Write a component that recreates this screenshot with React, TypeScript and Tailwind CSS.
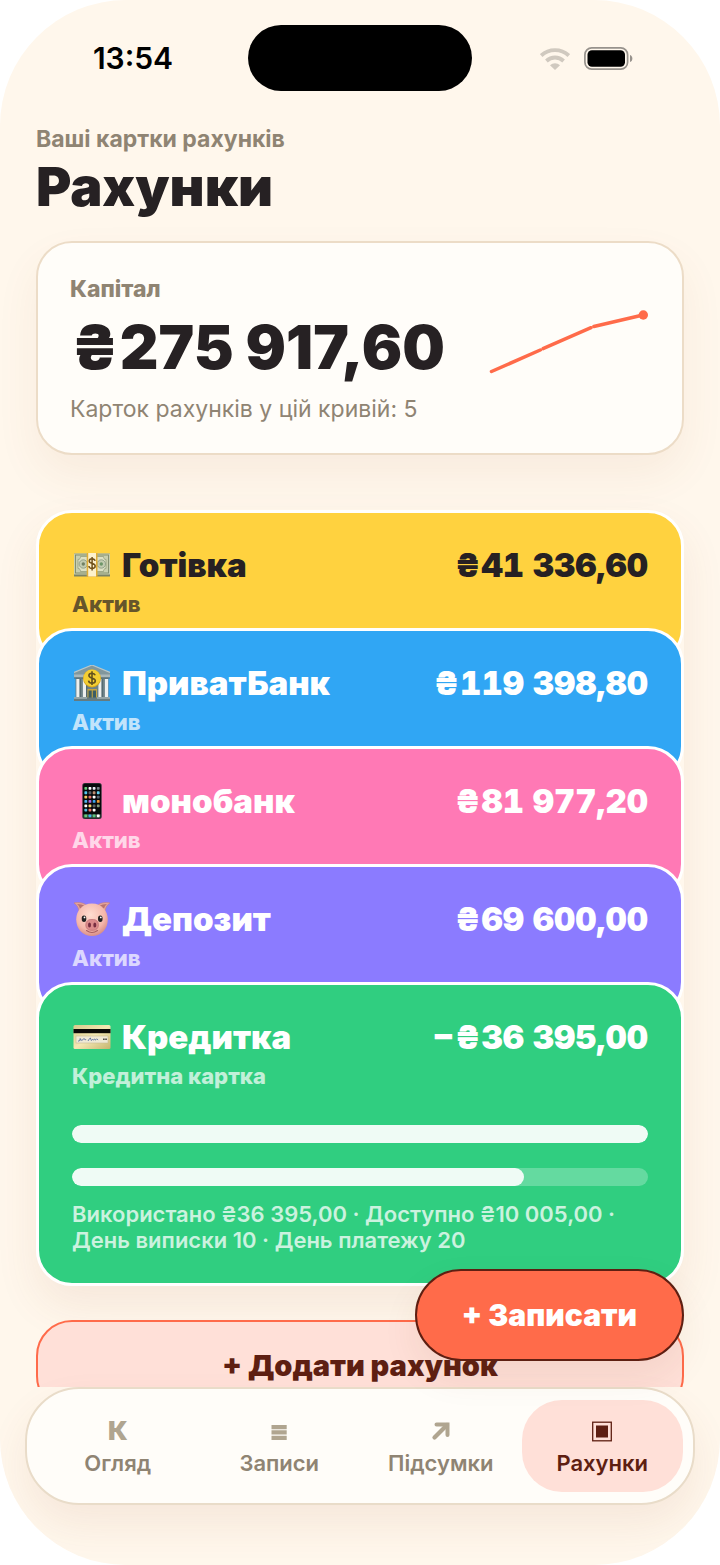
import type { ReactNode } from 'react';

type Account = {
  name: string;
  kind: string;
  balance: string;
  icon: ReactNode;
  tone: string;
};

function BanknoteIcon() {
  return (
    <svg viewBox="0 0 36 36" className="size-9" aria-hidden="true">
      <rect x="0" y="6.500" width="36" height="23" rx="0.600" fill="#7c8467" />
      <rect x="0" y="6.500" width="36" height="21" rx="0.600" fill="#c9cfae" />
      <rect x="1.500" y="8" width="33" height="18" fill="none" stroke="#7e8968" strokeWidth="0.900" />
      <path d="M4 12.500c2 0 2.500-1.500 2.500-3h23c0 1.500.5 3 2.500 3v9c-2 0-2.500 1.500-2.500 3h-23c0-1.500-.5-3-2.500-3z" fill="#dde0c4" stroke="#8b9674" strokeWidth="0.700" />
      <circle cx="9.300" cy="17" r="4.200" fill="#c2cbb0" stroke="#7f9178" strokeWidth="0.700" />
      <circle cx="27.300" cy="17" r="4.200" fill="#c2cbb0" stroke="#7f9178" strokeWidth="0.700" />
      <circle cx="9.300" cy="17" r="1.700" fill="#718164" />
      <circle cx="27.300" cy="17" r="1.700" fill="#6d9568" />
      <rect x="12.700" y="6" width="10.800" height="24" fill="#e0ad35" />
      <rect x="14.200" y="6" width="7.800" height="23.500" fill="#fdf2cd" />
      <path d="M21.100 13.900c-.4-1.400-1.500-2.100-3-2.100-1.700 0-2.900.8-2.900 2.300 0 3.300 6 1.600 6 5 0 1.500-1.300 2.400-3.100 2.400-1.700 0-3-.9-3.200-2.500M18.100 10v13.500" fill="none" stroke="#72531c" strokeWidth="1.500" />
    </svg>
  );
}

function BankIcon() {
  return (
    <svg viewBox="0 0 36 36" className="size-9" aria-hidden="true">
      <rect x="1.500" y="11" width="33" height="23" fill="#6d8287" />
      <path d="M0 7.500 18 0l18 7.500v3H0z" fill="#81979c" />
      <path d="M0 7.500 18 0l18 7.500" fill="none" stroke="#bac7c8" strokeWidth="1.200" />
      <rect x="0" y="9.500" width="36" height="3" fill="#a9b8ba" />
      <path d="M0 13h36" stroke="#526970" strokeWidth="1" />
      <path d="M4 14v18M10.500 14v18M26 14v18M32.500 14v18" stroke="#edf0ee" strokeWidth="3.200" />
      <path d="M6.200 14v18M12.700 14v18M28.200 14v18" stroke="#4d646b" strokeWidth="1.100" />
      <rect x="13.500" y="24" width="9.500" height="9" fill="#c6a640" />
      <rect x="14.500" y="25.500" width="3.200" height="7.500" fill="#3c5d65" />
      <rect x="18.800" y="25.500" width="3.200" height="7.500" fill="#3c5d65" />
      <rect x="0" y="32.500" width="36" height="3.500" fill="#657b80" />
      <path d="M0 33h13M23 33h13" stroke="#c2cbca" strokeWidth="1.200" />
      <circle cx="18" cy="13.500" r="9" fill="#d5a51c" />
      <circle cx="18" cy="13" r="8.500" fill="#f3ce32" />
      <path d="M21.200 10.300c-.5-1.400-1.600-2.100-3.200-2.100-1.800 0-3.100.9-3.100 2.300 0 3.500 6.400 1.800 6.400 5.200 0 1.600-1.400 2.500-3.300 2.500-1.800 0-3.200-.9-3.400-2.600M18 6.300v13.800" fill="none" stroke="#62501c" strokeWidth="1.600" />
    </svg>
  );
}

const appRows = [
  ['#67cc79', '#ffffff', '#e7e9f1', '#788084'],
  ['#54c7ef', '#59616a', '#bd8d71', '#63d1f0'],
  ['#f5cb62', '#e76f65', '#ffffff', '#59636f'],
  ['#4fb5ed', '#a96ae2', '#3ba6ec', '#ef9c35'],
  ['#ffffff', '#f5d775', '#5c6065', '#849b7c'],
  ['#52bee8', '#f17262', '#ffffff', '#0b0b0d'],
  ['#62cc78', '#42b6ed', '#5ac57c', '#ffffff'],
];

function PhoneIcon() {
  return (
    <svg viewBox="0 0 36 36" className="size-9" aria-hidden="true">
      <rect x="8.300" y="0" width="19.400" height="36" rx="2.500" fill="#34363a" />
      <rect x="9" y="0.700" width="18" height="34.600" rx="2" fill="#08090b" />
      <rect x="9.300" y="31" width="17.400" height="4" rx="1" fill="#34463d" />
      {appRows.map((row, y) =>
        row.map((color, x) => (
          <rect key={`${x}-${y}`} x={10.400 + x * 4.150} y={y === 6 ? 31.500 : 4 + y * 4.350} width="2.800" height="2.800" rx="0.700" fill={color} />
        )),
      )}
    </svg>
  );
}

function PigIcon() {
  return (
    <svg viewBox="0 0 36 36" className="size-9" aria-hidden="true">
      <defs>
        <radialGradient id="pig-skin" cx="0.45" cy="0.35" r="0.65">
          <stop offset="0" stopColor="#ffdcd0" />
          <stop offset="0.7" stopColor="#f5b7ab" />
          <stop offset="1" stopColor="#d98f88" />
        </radialGradient>
      </defs>
      <path d="M0 2c4-1 10-.5 13 3L5.500 12C4.800 7.500 3.500 4 0 2zM36 2c-4-1-10-.5-13 3l7.500 7c.7-4.500 2-8 5.500-10z" fill="#e6a59b" stroke="#c77f79" strokeWidth="0.600" />
      <path d="M3 3c3 0 6 .7 8 2.500L6.500 10C6 6.500 5 4.500 3 3zM33 3c-3 0-6 .7-8 2.500l4.500 4.500c.5-3.500 1.500-5.500 3.500-7z" fill="#b97370" />
      <path d="M18 2.500c9.500 0 15.800 7 15.800 16S27.500 35 18 35 2.200 27.500 2.200 18.500 8.500 2.500 18 2.500z" fill="url(#pig-skin)" />
      <ellipse cx="10" cy="17.800" rx="2.300" ry="3.200" fill="#222020" />
      <ellipse cx="26.300" cy="17.800" rx="2.300" ry="3.200" fill="#222020" />
      <circle cx="10.500" cy="16.400" r="0.900" fill="#fff" />
      <circle cx="26.800" cy="16.400" r="0.900" fill="#fff" />
      <path d="M12.500 29.500c3.500 2.500 7.500 2.500 11 0" fill="none" stroke="#a85e60" strokeWidth="1.100" strokeLinecap="round" />
      <rect x="11.800" y="18.500" width="12.600" height="10.800" rx="5" fill="#dc8b8c" stroke="#bb6c70" strokeWidth="0.700" />
      <ellipse cx="15.500" cy="24" rx="1.500" ry="2.500" fill="#782e41" />
      <ellipse cx="20.800" cy="24" rx="1.500" ry="2.500" fill="#782e41" />
    </svg>
  );
}

function CreditCardIcon() {
  return (
    <svg viewBox="0 0 36 36" className="size-9 overflow-visible" aria-hidden="true">
      <defs>
        <linearGradient id="card-gold" x1="0" y1="0" x2="1" y2="1">
          <stop offset="0" stopColor="#d8ca8b" />
          <stop offset="0.5" stopColor="#f4e8b3" />
          <stop offset="1" stopColor="#c5b56e" />
        </linearGradient>
      </defs>
      <rect x="-0.500" y="6" width="37" height="24" rx="1.500" fill="url(#card-gold)" />
      <rect x="-0.500" y="10" width="37" height="4.200" fill="#0b0a08" />
      <rect x="2" y="17" width="32" height="7" fill="#f0ead6" stroke="#c8b991" strokeWidth="0.600" />
      <path d="M4 21.800c1.200.9 2-.3 2.200-2.300.3 2.200 1 2.500 1.800 1.200 1 1.600 1.700-2.600 2.500-.7.500 1.400 1 .8 1.700 0M14 22c.7-1 1.700-2.900 2.300-3 .6.900.6 2 1 2.500.9-.6 1.300-1.800 1.800-.6.700 1.300 1.300-2.500 2-.3.600 1.300 1.300-1.600 2-.4l1 .7" fill="none" stroke="#536a9d" strokeWidth="0.900" />
      <path d="M29 20.300h4" stroke="#4e4c48" strokeWidth="1.600" strokeDasharray="1.700 0.500" />
    </svg>
  );
}

const accounts: Account[] = [
  { name: 'Готівка', kind: 'Актив', balance: '₴41 336,60', icon: <BanknoteIcon />, tone: 'bg-[#ffd23f] text-[#262123]' },
  { name: 'ПриватБанк', kind: 'Актив', balance: '₴119 398,80', icon: <BankIcon />, tone: 'bg-[#30a6f4] text-white' },
  { name: 'монобанк', kind: 'Актив', balance: '₴81 977,20', icon: <PhoneIcon />, tone: 'bg-[#ff79b5] text-white' },
  { name: 'Депозит', kind: 'Актив', balance: '₴69 600,00', icon: <PigIcon />, tone: 'bg-[#8b7bff] text-white' },
];

function AccountHeading({ account }: { account: Account }) {
  return (
    <>
      <div className="flex h-10 items-center justify-between text-[33px] leading-10 font-black">
        <h2 className="flex items-center gap-3 pl-0.5">
          {account.icon}
          {account.name}
        </h2>
        <span className="whitespace-nowrap tabular-nums">{account.balance}</span>
      </div>
      <p className="mt-[5px] text-[22px] leading-7 font-extrabold opacity-70">{account.kind}</p>
    </>
  );
}

function Meter({ label, value }: { label: string; value: number }) {
  return (
    <div
      role="progressbar"
      aria-label={label}
      aria-valuenow={value}
      aria-valuemin={0}
      aria-valuemax={100}
      className="h-[18px] overflow-hidden rounded-full bg-white/25"
    >
      <div className="h-full rounded-full bg-[#effbf5]" style={{ width: `${value}%` }} />
    </div>
  );
}

function StatusBar() {
  return (
    <header className="grid shrink-0 grid-cols-[1fr_224px_1fr] items-center px-[18px] pt-[25px] text-black">
      <time className="text-center text-[30px] leading-9 font-semibold">13:54</time>
      <div className="h-[66px] rounded-full bg-black" />
      <div className="flex items-center justify-center gap-3.5">
        <svg viewBox="0 0 30 23" className="h-[23px] w-[30px]" aria-label="Wi-Fi">
          <path d="M1.200 8.500C9 1.200 21 1.200 28.800 8.500" fill="none" stroke="#d0c9bf" strokeWidth="3.800" />
          <path d="M6.400 14c5-4.700 12.200-4.700 17.200 0" fill="none" stroke="#d0c9bf" strokeWidth="3.800" />
          <path d="M10 18.300c2.900-2.700 7.100-2.700 10 0L15 23z" fill="#d0c9bf" />
        </svg>
        <svg viewBox="0 0 50 23" className="h-[23px] w-[50px]" aria-label="Battery">
          <rect x="0.900" y="0.900" width="42.700" height="21.200" rx="6.800" fill="none" stroke="#97928c" strokeWidth="1.700" />
          <rect x="3.500" y="3.300" width="37.500" height="16.400" rx="4.500" fill="#000" />
          <path d="M46 8c3.200 1 3.200 6 0 7z" fill="#97928c" />
        </svg>
      </div>
    </header>
  );
}

function Sparkline() {
  return (
    <svg viewBox="0 0 160 96" className="h-24 w-40 shrink-0 overflow-visible" aria-hidden="true">
      <g stroke="#ff6b4a" strokeWidth="3.500" strokeLinecap="round">
        <path d="M1.500 70.500 50.300 49" />
        <path d="M53 47.600 101 26.700" />
        <path d="M103.800 25.500 153 14" />
      </g>
      <circle cx="153.300" cy="14" r="4.700" fill="#ff6b4a" />
    </svg>
  );
}

const tabs: { label: string; icon: ReactNode; active?: boolean }[] = [
  { label: 'Огляд', icon: <span className="text-[26px] leading-7 font-black">К</span> },
  {
    label: 'Записи',
    icon: (
      <svg viewBox="0 0 28 28" className="size-7" fill="currentColor" aria-hidden="true">
        <path d="M6.500 8h15.200v4.300H6.500zM6.500 13.300h15.200v4.300H6.500zM6.500 18.700h15.200v4.300H6.500z" />
      </svg>
    ),
  },
  {
    label: 'Підсумки',
    icon: (
      <svg viewBox="0 0 28 28" className="size-7" fill="none" stroke="currentColor" aria-hidden="true">
        <path d="M7.500 20.500 20 8" strokeWidth="4.200" strokeLinecap="round" />
        <path d="M9.500 7.500h11v10.500" strokeWidth="4" strokeLinecap="round" strokeLinejoin="miter" />
      </svg>
    ),
  },
  {
    label: 'Рахунки',
    active: true,
    icon: (
      <svg viewBox="0 0 28 28" className="size-7" aria-hidden="true">
        <rect x="4.700" y="5.200" width="18.600" height="18.600" fill="none" stroke="currentColor" strokeWidth="1.300" />
        <rect x="8" y="8.500" width="12" height="12" fill="currentColor" />
      </svg>
    ),
  },
];

export default function App() {
  return (
    <div className="relative flex h-screen w-full flex-col overflow-hidden rounded-[126px] bg-[#fff7ec] font-['Inter','Noto_Sans',sans-serif] text-[#262123]">
      <StatusBar />

      <main className="min-h-0 flex-1 overflow-y-auto px-9 pt-[34px] [scrollbar-width:none]">
        <p className="text-[23px] leading-7 font-bold text-[#8f8473]">Ваші картки рахунків</p>
        <h1 className="mt-1 text-[54px] leading-[60px] font-black">Рахунки</h1>

        <section className="mt-6 flex items-center justify-between rounded-[36px] border-2 border-[#ecdcc7] bg-[#fffdf9] px-8 pt-8 pb-[30px] shadow-[0_20px_44px_rgba(150,80,40,0.07)]">
          <div>
            <h2 className="text-[23px] leading-7 font-extrabold text-[#8f8473]">Капітал</h2>
            <p className="mt-2 text-[60px] leading-[72px] font-black whitespace-nowrap">₴275 917,60</p>
            <p className="mt-3 text-[23px] leading-7 whitespace-nowrap text-[#8f8473]">Карток рахунків у цій кривій: 5</p>
          </div>
          <Sparkline />
        </section>

        <ul className="mt-[55px] rounded-[36px] shadow-[0_20px_44px_rgba(150,80,40,0.09)]">
          {accounts.map((account) => (
            <li key={account.name} className={`-mb-9 rounded-[36px] border-3 border-white px-[33px] pt-8 pb-[43px] ${account.tone}`}>
              <AccountHeading account={account} />
            </li>
          ))}
          <li className="relative rounded-[36px] border-3 border-white bg-[#30ce80] px-[33px] pt-8 pb-[30px] text-white">
            <AccountHeading
              account={{ name: 'Кредитка', kind: 'Кредитна картка', balance: '−₴36 395,00', icon: <CreditCardIcon />, tone: '' }}
            />
            <div className="mt-[35px] flex flex-col gap-[25px]">
              <Meter label="Баланс" value={100} />
              <Meter label="Використано" value={78.4} />
            </div>
            <p className="mt-[15px] text-[22px] leading-[26px] font-semibold text-white/75">
              Використано ₴36 395,00 · Доступно ₴10 005,00 · День виписки 10 · День платежу 20
            </p>
          </li>
        </ul>

        <button className="mt-[34px] h-[92px] w-full rounded-[36px] border-2 border-[#ff6b4a] bg-[#ffe0d8] text-[29px] leading-9 font-black text-[#5e1f12]">
          + Додати рахунок
        </button>
      </main>

      <div className="relative shrink-0 px-[25px] pb-[60px]">
        <button className="absolute right-9 bottom-full mb-[26px] h-[92px] rounded-full border-2 border-[#5e1f12] bg-[#ff6b4a] px-[45px] text-[30px] leading-9 font-black whitespace-nowrap text-white shadow-[0_16px_36px_rgba(120,60,20,0.08)]">
          + Записати
        </button>
        <nav className="grid grid-cols-4 rounded-[54px] border-2 border-[#e9dcc9] bg-[#fffdf9] px-2.5 pt-[11px] pb-[11px] shadow-[0_20px_40px_rgba(150,80,40,0.09)]">
          {tabs.map((tab) => (
            <a
              key={tab.label}
              href="#"
              aria-current={tab.active ? 'page' : undefined}
              className={`flex h-[92px] flex-col items-center justify-end gap-1 rounded-[40px] pb-[15px] ${tab.active ? 'bg-[#ffe0d8] text-[#5e1f12]' : 'text-[#b0a590]'}`}
            >
              {tab.icon}
              <span className={`text-[22px] leading-7 font-semibold ${tab.active ? '' : 'text-[#8f8473]'}`}>{tab.label}</span>
            </a>
          ))}
        </nav>
      </div>
    </div>
  );
}
